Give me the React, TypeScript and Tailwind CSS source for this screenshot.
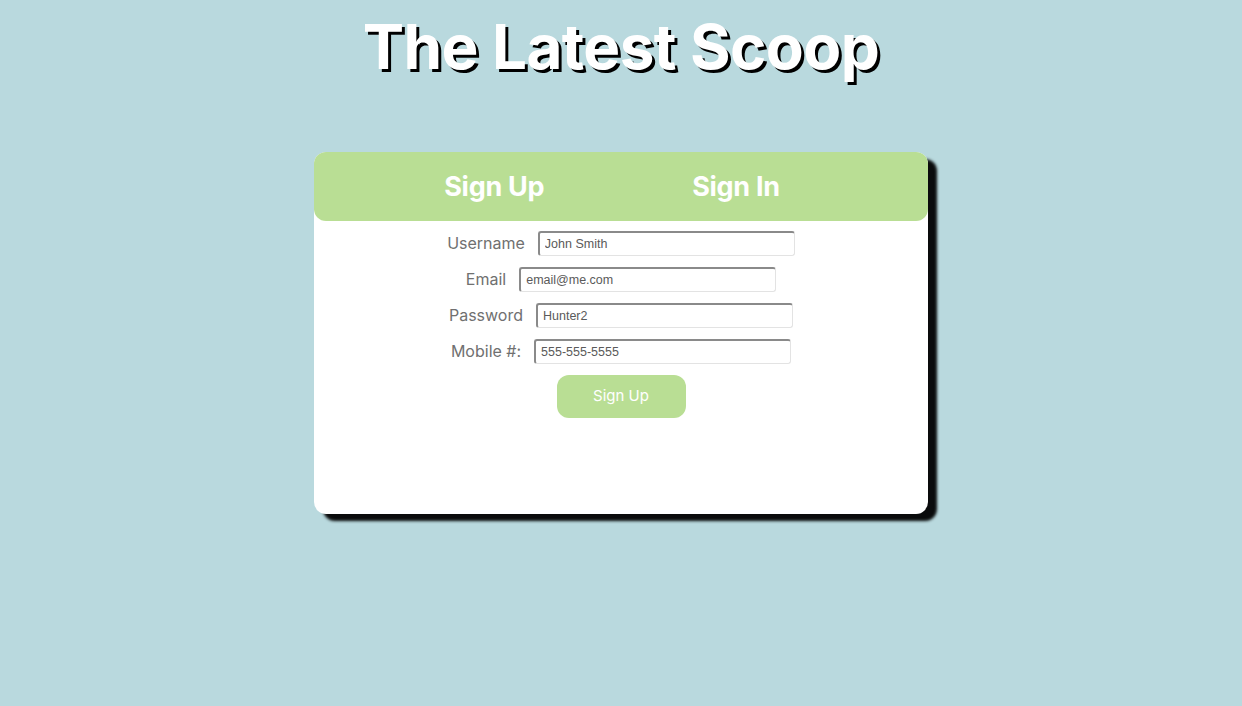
import { useState } from "react";

const fields = [
  { label: "Username", value: "John Smith", type: "text" },
  { label: "Email", value: "email@me.com", type: "email" },
  { label: "Password", value: "Hunter2", type: "text" },
  { label: "Mobile #:", value: "555-555-5555", type: "tel" },
];

export default function App() {
  const [tab, setTab] = useState<"up" | "in">("up");

  return (
    <div className="min-h-[706px] w-full bg-[#b9d9de] font-['Inter',sans-serif]">
      <h1 className="pt-[11px] text-center text-[62px] font-bold leading-[72px] tracking-[-0.6px] text-white [text-shadow:3px_3px_0_#000]">
        The Latest Scoop
      </h1>

      <div className="mx-auto mt-[69px] flex h-[362px] w-[614px] flex-col rounded-xl bg-white shadow-[9px_7px_3px_rgba(0,0,0,0.95)]">
        <div className="flex h-[69px] items-center justify-center gap-[148px] rounded-xl bg-[#b9de94] pr-[18px] pt-[2px]">
          <button
            type="button"
            onClick={() => setTab("up")}
            className="text-[27px] font-bold tracking-[-0.3px] text-white"
          >
            Sign Up
          </button>
          <button
            type="button"
            onClick={() => setTab("in")}
            className="text-[27px] font-bold tracking-[-0.3px] text-white"
          >
            Sign In
          </button>
        </div>

        <form className="flex flex-col items-center pt-[10px]" onSubmit={(e) => e.preventDefault()}>
          {fields.map((f) => (
            <div key={f.label} className="mb-[11px] flex items-center gap-[13px]">
              <label className="-mt-[2px] text-[16px] text-[#707070]">{f.label}</label>
              <input
                type={f.type}
                defaultValue={f.value}
                className="h-[25px] w-[257px] rounded-[3px] border border-t-2 border-l-2 border-t-[#8a8a8a] border-l-[#8a8a8a] border-r-[#e3e3e3] border-b-[#e3e3e3] bg-white px-[5px] font-['Liberation_Sans',Arial,sans-serif] text-[12.5px] text-[#5a5a5a] outline-none"
              />
            </div>
          ))}
          <button
            type="submit"
            className="h-[43px] w-[129px] rounded-xl bg-[#b9de94] text-[15px] text-white"
          >
            {tab === "up" ? "Sign Up" : "Sign In"}
          </button>
        </form>
      </div>
    </div>
  );
}
